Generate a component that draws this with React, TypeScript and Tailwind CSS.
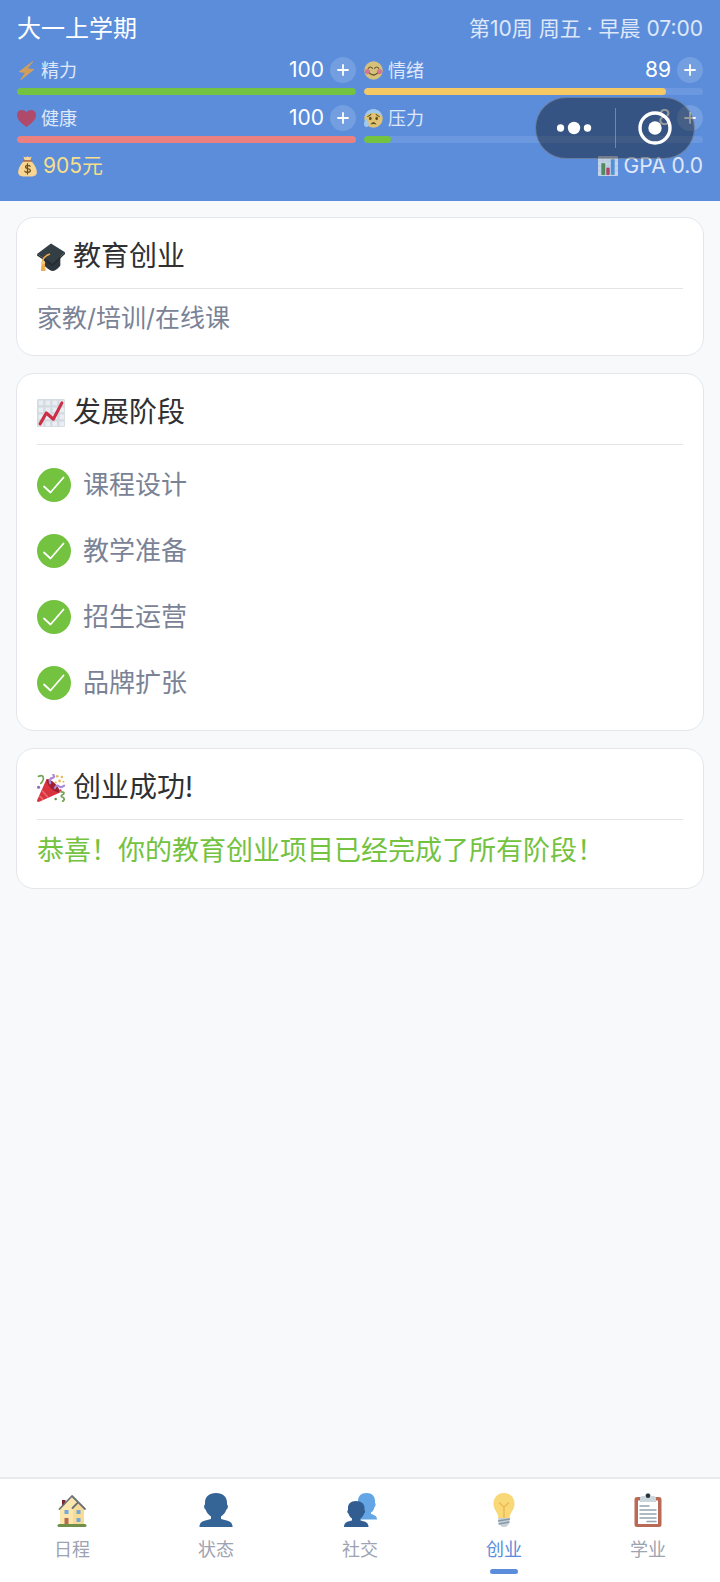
import React, { useState } from 'react';

const BoltIcon = () => (
  <svg viewBox="0 0 36 36" className="size-[19px] opacity-80">
    <path d="M30 1 4 20.500l12 1.500L7 35.500 32 16l-13-1.500z" fill="#f2a33c" stroke="#f2a33c" strokeWidth="1.500" strokeLinejoin="round" />
  </svg>
);

const HeartIcon = () => (
  <svg viewBox="0 0 36 36" className="size-[19px] opacity-80">
    <path d="M18 34C10 29 0 21 0 11.500 0 1 13-1 18 6.500 23-1 36 1 36 11.500 36 21 26 29 18 34z" fill="#c43a4f" />
  </svg>
);

const SmileIcon = () => (
  <svg viewBox="0 0 36 36" className="size-[19px] opacity-80">
    <circle cx="18" cy="18" r="17.500" fill="#f7cd62" />
    <circle cx="6.500" cy="20" r="5" fill="#f2737f" />
    <circle cx="29.500" cy="20" r="5" fill="#f2737f" />
    <path d="M8 14q4-5 8 0M20 14q4-5 8 0" fill="none" stroke="#664500" strokeWidth="2" strokeLinecap="round" />
    <path d="M10.500 23q7.500 7 15 0" fill="none" stroke="#664500" strokeWidth="2.500" strokeLinecap="round" />
  </svg>
);

const AnxiousIcon = () => (
  <svg viewBox="0 0 36 36" className="size-[19px] opacity-85">
    <circle cx="18" cy="18" r="17.500" fill="#f7cd62" />
    <path d="M1 15C3 5 10 .5 18 .5S33 5 35 15C28 8 24 7.500 18 7.500S8 8 1 15z" fill="#a9d3f3" />
    <path d="M4 18c-3 5-4 7-4 10.500C0 32 2 34 5 34s4-2 4-5.500C9 25 7 23 4 18z" fill="#a9d3f3" />
    <path d="M7 14q4-1 6-4M29 14q-4-1-6-4" fill="none" stroke="#664500" strokeWidth="2" strokeLinecap="round" />
    <ellipse cx="12" cy="18" rx="2.500" ry="3.400" fill="#664500" />
    <ellipse cx="24" cy="18" rx="2.500" ry="3.400" fill="#664500" />
    <path d="M12 29.500q6-10 12 0-6-2.500-12 0z" fill="#664500" />
  </svg>
);

const MoneyIcon = () => (
  <svg viewBox="0 0 36 36" className="size-[21px]">
    <path d="M12 8h12c4 4 10 12 10 20 0 5-4 7-8 7H10c-4 0-8-2-8-7C2 20 8 12 12 8z" fill="#fbd691" />
    <path d="M11 1q3.500 2 7 0 3.500 2 7 0l-2 6H13z" fill="#fbd691" />
    <path d="M11 8.500h14" stroke="#b5683a" strokeWidth="2.500" strokeLinecap="round" />
    <path d="M22.500 17.500c-1-2-8-2.500-8 1.200 0 4 8.500 2 8.500 6.300 0 4-8.500 3.500-9.500 1M18 13v18" fill="none" stroke="#6b5226" strokeWidth="2.200" strokeLinecap="round" />
  </svg>
);

const BarsIcon = () => (
  <svg viewBox="0 0 36 36" className="size-[20px] opacity-80">
    <rect width="36" height="36" rx="2" fill="#dde5ec" />
    <path d="M0 9h36M0 18h36M0 27h36M9 0v36M18 0v36M27 0v36" stroke="#c3d0da" strokeWidth="1" />
    <rect x="6" y="13" width="7" height="21" fill="#4f8a3d" />
    <rect x="15" y="21" width="6" height="13" fill="#c42d4b" />
    <rect x="23" y="6" width="7" height="28" fill="#4f92d6" />
  </svg>
);

const GradCapIcon = () => (
  <svg viewBox="0 0 36 36" className="size-7">
    <path d="M8 16v12c4 3 8 8 12 8s8-4 10-7V14z" fill="#2c363c" />
    <path d="M0 14 18 .5 36 12 20 27z" fill="#333e45" />
    <path d="M0 14 20 27 36 12v2L20 29.500 0 16z" fill="#242c31" />
    <path d="M16 14.500C12 16 8.500 19 7.500 22v6" fill="none" stroke="#efab4c" strokeWidth="2" strokeLinecap="round" />
    <path d="M6 25h4l1 11q-3 1.500-6 0z" fill="#efab4c" />
    <circle cx="8" cy="25" r="2.500" fill="#f7c778" />
  </svg>
);

const TrendIcon = () => (
  <svg viewBox="0 0 36 36" className="size-7">
    <rect width="36" height="36" rx="2" fill="#d3dbe1" />
    <g fill="#e8eef2">
      {[2, 11, 20, 29].map((y) =>
        [2, 11, 20, 29].map((x) => <rect key={`${x}-${y}`} x={x} y={y} width="6" height="6" />)
      )}
    </g>
    <path d="m4 32 8-14 9 8L32 5" fill="none" stroke="#cc2f45" strokeWidth="4" strokeLinecap="round" strokeLinejoin="round" />
  </svg>
);

const PartyIcon = () => (
  <svg viewBox="0 0 36 36" className="size-7">
    <path d="M12 7 0 34q0 2 2 2l27-12C28 16 20 8 12 7z" fill="#d9333f" />
    <path d="M12 7c1 8 9 16 17 17 2-5-11-19-17-17z" fill="#a01f31" />
    <path d="m6 21 8 9M3 28l5 5" stroke="#ec6b70" strokeWidth="2" />
    <path d="M2 3q7-3 6 4-1 3-3 5M31 23q5 0 3 3-5 2-1 4 4 2 0 5" fill="none" stroke="#6fa552" strokeWidth="2.200" strokeLinecap="round" />
    <path d="M17 12q-2-6 3-7 3-1 1-4M23 18q2-5 5-2 3 2 7-1" fill="none" stroke="#a987d6" strokeWidth="2.800" strokeLinecap="round" />
    <g fill="#e5bb5a">
      <circle cx="26" cy="3" r="1.800" />
      <circle cx="32" cy="4" r="1.600" />
      <circle cx="29" cy="9" r="1.800" />
      <circle cx="34" cy="10" r="1.300" />
      <circle cx="24" cy="11" r="1.500" />
    </g>
    <circle cx="2" cy="17" r="2" fill="#8f64bd" />
    <circle cx="24" cy="32" r="1.600" fill="#5f9446" />
    <circle cx="30" cy="21" r="1.500" fill="#d9333f" />
  </svg>
);

const CheckIcon = () => (
  <svg viewBox="0 0 34 34" className="size-[34px] shrink-0">
    <circle cx="17" cy="17" r="17" fill="#73c240" />
    <path d="m7 18.500 6.500 6L26.500 9.500" fill="none" stroke="#fff" strokeWidth="1.800" strokeLinecap="round" strokeLinejoin="round" />
  </svg>
);

const HouseIcon = () => (
  <svg viewBox="0 0 34 34" className="size-[34px]">
    <path d="M7 7h3.500v8H7z" fill="#7c2530" />
    <path d="M5 16 17 4l12 12v15H5z" fill="#fbe6ad" />
    <path d="M18 16l5-5 6 5v15H18z" fill="#f8dc95" />
    <path d="M4.500 16 17 3l13 13M17.500 15l5.500-5.500" fill="none" stroke="#6d7074" strokeWidth="1.800" strokeLinecap="round" strokeLinejoin="round" />
    <path d="M9.500 17h4v4h-4zM21.500 17h4v4h-4zM21.500 25h4v4h-4z" fill="#72a9d8" />
    <path d="M9.500 25h4v7h-4z" fill="#b56a4d" />
    <rect x="2.500" y="31" width="29" height="3" rx="1.500" fill="#70904a" />
  </svg>
);

const PersonIcon = () => (
  <svg viewBox="0 0 34 34" className="size-[34px]">
    <path d="M17 0c7 0 11 4 11 9.500v2c1.500.5 1 5-.8 5.200C26.500 20 24 22 22 23.500V26c5 1.500 11 1.500 11.500 7v1H.5v-1C1 27.500 7 27.500 12 26v-2.500C10 22 7.500 20 6.800 16.700 5 16.500 4.500 12 6 11.500v-2C6 4 10 0 17 0z" fill="#356597" />
  </svg>
);

const PeopleIcon = () => (
  <svg viewBox="0 0 34 34" className="size-[34px]">
    <path d="M23.500 0C29 0 32 3.500 32 8v2c1 .5.8 3.500-.5 4-.6 3-2 4.500-3.500 5.500V21c3 1 6 1.500 6 5.500H15V8c0-4.500 3-8 8.500-8z" fill="#64a5e5" />
    <path d="M13 8c5.500 0 8.500 3 8.500 7v2c1 .5.800 3-.5 3.500-.6 2.500-2 4-3.500 5v2c4 1 8 1.500 8 6.500H1c0-5 4-5.500 8-6.500v-2c-1.500-1-3-2.500-3.500-5C4.200 20 4 17.500 5 17v-2c0-4 2.500-7 8-7z" fill="#315d91" />
  </svg>
);

const BulbIcon = () => (
  <svg viewBox="0 0 34 34" className="size-[34px]">
    <path d="M17 0c6.500 0 10.500 4.500 10.500 11 0 6-4.500 8-5 14h-11c-.5-6-5-8-5-14C6.500 4.500 10.500 0 17 0z" fill="#f9d877" />
    <path d="m12.500 10 4.500 4 4.500-4M17 14v11" fill="none" stroke="#eebb55" strokeWidth="1.600" strokeLinecap="round" />
    <path d="M11 25h12l-1 6-3 3h-4l-3-3z" fill="#c6d1d9" />
    <path d="m11 28 12-2M11.500 31l11-2" stroke="#8799a6" strokeWidth="1.300" />
  </svg>
);

const ClipboardIcon = () => (
  <svg viewBox="0 0 34 34" className="size-[34px]">
    <rect x="3.500" y="4" width="27" height="30" rx="2.500" fill="#b96a57" />
    <path d="M7 7.500h20v23.500H7z" fill="#fff" />
    <path d="M9 9V5q0-2 3-2h2q0-3 3-3t3 3h2q3 0 3 2v4z" fill="#ccd6dd" />
    <circle cx="17" cy="2.800" r="2.200" fill="#292f33" />
    <path d="M9 13h9M9 17h16M9 21h16M9 25h16M16 28.500h9" stroke="#95a3ae" strokeWidth="1.500" strokeLinecap="round" />
  </svg>
);

interface Stat {
  label: string;
  value: number;
  color: string;
  Icon: React.FC;
}

const stats: Stat[] = [
  { label: '精力', value: 100, color: 'bg-[#73c240]', Icon: BoltIcon },
  { label: '情绪', value: 89, color: 'bg-[#f6c964]', Icon: SmileIcon },
  { label: '健康', value: 100, color: 'bg-[#eb8080]', Icon: HeartIcon },
  { label: '压力', value: 8, color: 'bg-[#73c240]', Icon: AnxiousIcon },
];

const stages = ['课程设计', '教学准备', '招生运营', '品牌扩张'];

const tabs = [
  { label: '日程', Icon: HouseIcon },
  { label: '状态', Icon: PersonIcon },
  { label: '社交', Icon: PeopleIcon },
  { label: '创业', Icon: BulbIcon },
  { label: '学业', Icon: ClipboardIcon },
];

const StatItem: React.FC<{ stat: Stat }> = ({ stat }) => {
  const { label, value, color, Icon } = stat;
  return (
    <div className="flex flex-col gap-[5px]">
      <div className="flex h-[26px] items-center">
        <Icon />
        <span className="ml-[5px] text-[18px] text-white/80">{label}</span>
        <span className="ml-auto text-[21px] text-white">{value}</span>
        <button
          type="button"
          aria-label={`增加${label}`}
          className="ml-[6px] flex size-[26px] items-center justify-center rounded-full bg-white/15"
        >
          <svg viewBox="0 0 12 12" className="size-3">
            <path d="M6 1v10M1 6h10" stroke="#fff" strokeWidth="1.800" strokeLinecap="round" />
          </svg>
        </button>
      </div>
      <div className="h-[7px] overflow-hidden rounded-full bg-white/10">
        <div className={`h-full rounded-full ${color}`} style={{ width: `${value}%` }} />
      </div>
    </div>
  );
};

const Card: React.FC<{ title: string; icon: React.ReactNode; children: React.ReactNode }> = ({ title, icon, children }) => (
  <section className="rounded-[18px] border border-[#e3e6ea] bg-white px-5 py-[19px]">
    <h2 className="flex items-center gap-2 border-b border-[#e3e5e8] pb-3 text-[28px] leading-[39px] text-[#2f3033]">
      {icon}
      {title}
    </h2>
    <div className="mt-3">{children}</div>
  </section>
);

const App: React.FC = () => {
  const [active, setActive] = useState('创业');

  return (
    <div className="relative flex min-h-screen flex-col bg-[#f7f9fb] font-['Inter','Noto_Sans_CJK_SC',sans-serif]">
      <header className="bg-[#5b8ddb] px-[17px] pt-3 pb-[21px]">
        <div className="flex h-[33px] items-center justify-between">
          <h1 className="text-[24px] text-white">大一上学期</h1>
          <span className="text-[21px] text-white/80">第10周 周五 · 早晨 07:00</span>
        </div>
        <div className="mt-3 grid grid-cols-2 gap-x-2 gap-y-[10px]">
          {stats.map((stat) => (
            <StatItem key={stat.label} stat={stat} />
          ))}
        </div>
        <div className="mt-[9px] flex h-7 items-center justify-between text-[21px]">
          <span className="flex items-center gap-[5px] text-[#f5df8b]">
            <MoneyIcon />
            905元
          </span>
          <span className="flex items-center gap-[6px] text-white/80">
            <BarsIcon />
            GPA 0.0
          </span>
        </div>
      </header>

      {/* Mini program capsule, floats above the header */}
      <div className="absolute top-[97px] right-[25px] flex h-[62px] w-[160px] items-center rounded-full border border-white/25 bg-black/40">
        <button type="button" aria-label="更多" className="flex h-full flex-1 items-center justify-center">
          <svg viewBox="0 0 36 14" className="h-[14px] w-9">
            <circle cx="3.500" cy="7" r="3.700" fill="#fff" />
            <circle cx="17" cy="7" r="6.200" fill="#fff" />
            <circle cx="30.500" cy="7" r="3.700" fill="#fff" />
          </svg>
        </button>
        <span className="h-10 w-px bg-white/30" />
        <button type="button" aria-label="关闭" className="flex h-full flex-1 items-center justify-center">
          <svg viewBox="0 0 34 34" className="size-[34px]">
            <circle cx="17" cy="17" r="15" fill="none" stroke="#fff" strokeWidth="3.400" />
            <circle cx="17" cy="17" r="6.700" fill="#fff" />
          </svg>
        </button>
      </div>

      <main className="flex flex-1 flex-col gap-[17px] px-4 py-4">
        <Card title="教育创业" icon={<GradCapIcon />}>
          <p className="text-[25px] leading-[35px] text-[#7a8296]">家教/培训/在线课</p>
        </Card>

        <Card title="发展阶段" icon={<TrendIcon />}>
          <ul className="flex flex-col gap-3 py-px">
            {stages.map((stage) => (
              <li key={stage} className="flex items-center gap-3 py-[10px] text-[26px] leading-[34px] text-[#7a8296]">
                <CheckIcon />
                {stage}
              </li>
            ))}
          </ul>
        </Card>

        <Card title="创业成功!" icon={<PartyIcon />}>
          <p className="text-[27px] leading-[37px] text-[#73c240]">恭喜！你的教育创业项目已经完成了所有阶段！</p>
        </Card>
      </main>

      <nav className="sticky bottom-0 flex border-t-2 border-[#e9eaeb] bg-white pt-[14px] pb-2">
        {tabs.map(({ label, Icon }) => (
          <button
            key={label}
            type="button"
            onClick={() => setActive(label)}
            className={`flex flex-1 flex-col items-center text-[18px] leading-[26px] ${
              active === label ? 'text-[#5b8ddb]' : 'text-[#9ca3b2]'
            }`}
          >
            <Icon />
            <span className="mt-[10px]">{label}</span>
            <span className={`mt-[6px] h-[5px] w-7 rounded-full ${active === label ? 'bg-[#5b8ddb]' : 'bg-transparent'}`} />
          </button>
        ))}
      </nav>
    </div>
  );
};

export default App;
